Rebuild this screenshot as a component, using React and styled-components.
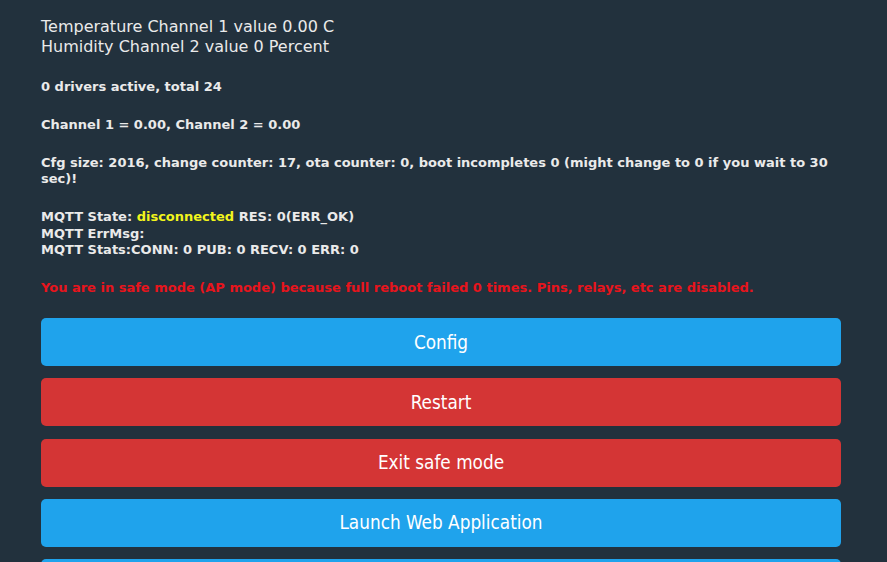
import React from "react"
import styled, { createGlobalStyle } from "styled-components"

const GlobalStyle = createGlobalStyle`
  html, body {
    margin: 0;
    padding: 0;
    background: #22313d;
  }
  body {
    font-family: "DejaVu Sans", Verdana, sans-serif;
    color: #eaeaea;
    overflow: hidden;
  }
`

const Page = styled.div`
  width: 800px;
  padding: 17px 0 0 41px;
`

const Reading = styled.div`
  font-size: 16px;
  line-height: 20px;
  margin-bottom: 4px;
`

const Note = styled.h5`
  font-size: 13px;
  font-weight: bold;
  line-height: 16.5px;
  margin: 21.5px 0;
`

const Highlight = styled.span`
  color: ${p => p.$tone === "warn" ? "#f2f51c" : "inherit"};
`

const Alert = styled(Note)`
  color: #e8141c;
`

const Buttons = styled.div`
  display: flex;
  flex-direction: column;
  gap: 12.25px;
  margin-top: 18.5px;
`

const Button = styled.button`
  display: block;
  width: 100%;
  height: 48px;
  border: 0;
  border-radius: 5px;
  background: ${p => p.$danger ? "#d43535" : "#1fa3ec"};
  color: #fff;
  font-family: "DejaVu Sans Condensed", "DejaVu Sans", sans-serif;
  font-size: 18.8px;
  cursor: pointer;
`

const buttons = [
  { label: "Config" },
  { label: "Restart", danger: true },
  { label: "Exit safe mode", danger: true },
  { label: "Launch Web Application" },
  { label: "Information" },
]

export default function App() {
  return (
    <>
      <GlobalStyle />
      <Page>
        <Reading>
          Temperature Channel 1 value 0.00 C<br />
          Humidity Channel 2 value 0 Percent
        </Reading>
        <Note>0 drivers active, total 24</Note>
        <Note>Channel 1 = 0.00, Channel 2 = 0.00</Note>
        <Note>
          Cfg size: 2016, change counter: 17, ota counter: 0, boot incompletes 0 (might change to 0 if you wait to 30 sec)!
        </Note>
        <Note>
          MQTT State: <Highlight $tone="warn">disconnected</Highlight> RES: 0(ERR_OK)<br />
          MQTT ErrMsg: <br />
          MQTT Stats:CONN: 0 PUB: 0 RECV: 0 ERR: 0
        </Note>
        <Alert>You are in safe mode (AP mode) because full reboot failed 0 times. Pins, relays, etc are disabled.</Alert>
        <Buttons>
          {buttons.map(b => (
            <Button key={b.label} $danger={b.danger}>{b.label}</Button>
          ))}
        </Buttons>
      </Page>
    </>
  )
}
